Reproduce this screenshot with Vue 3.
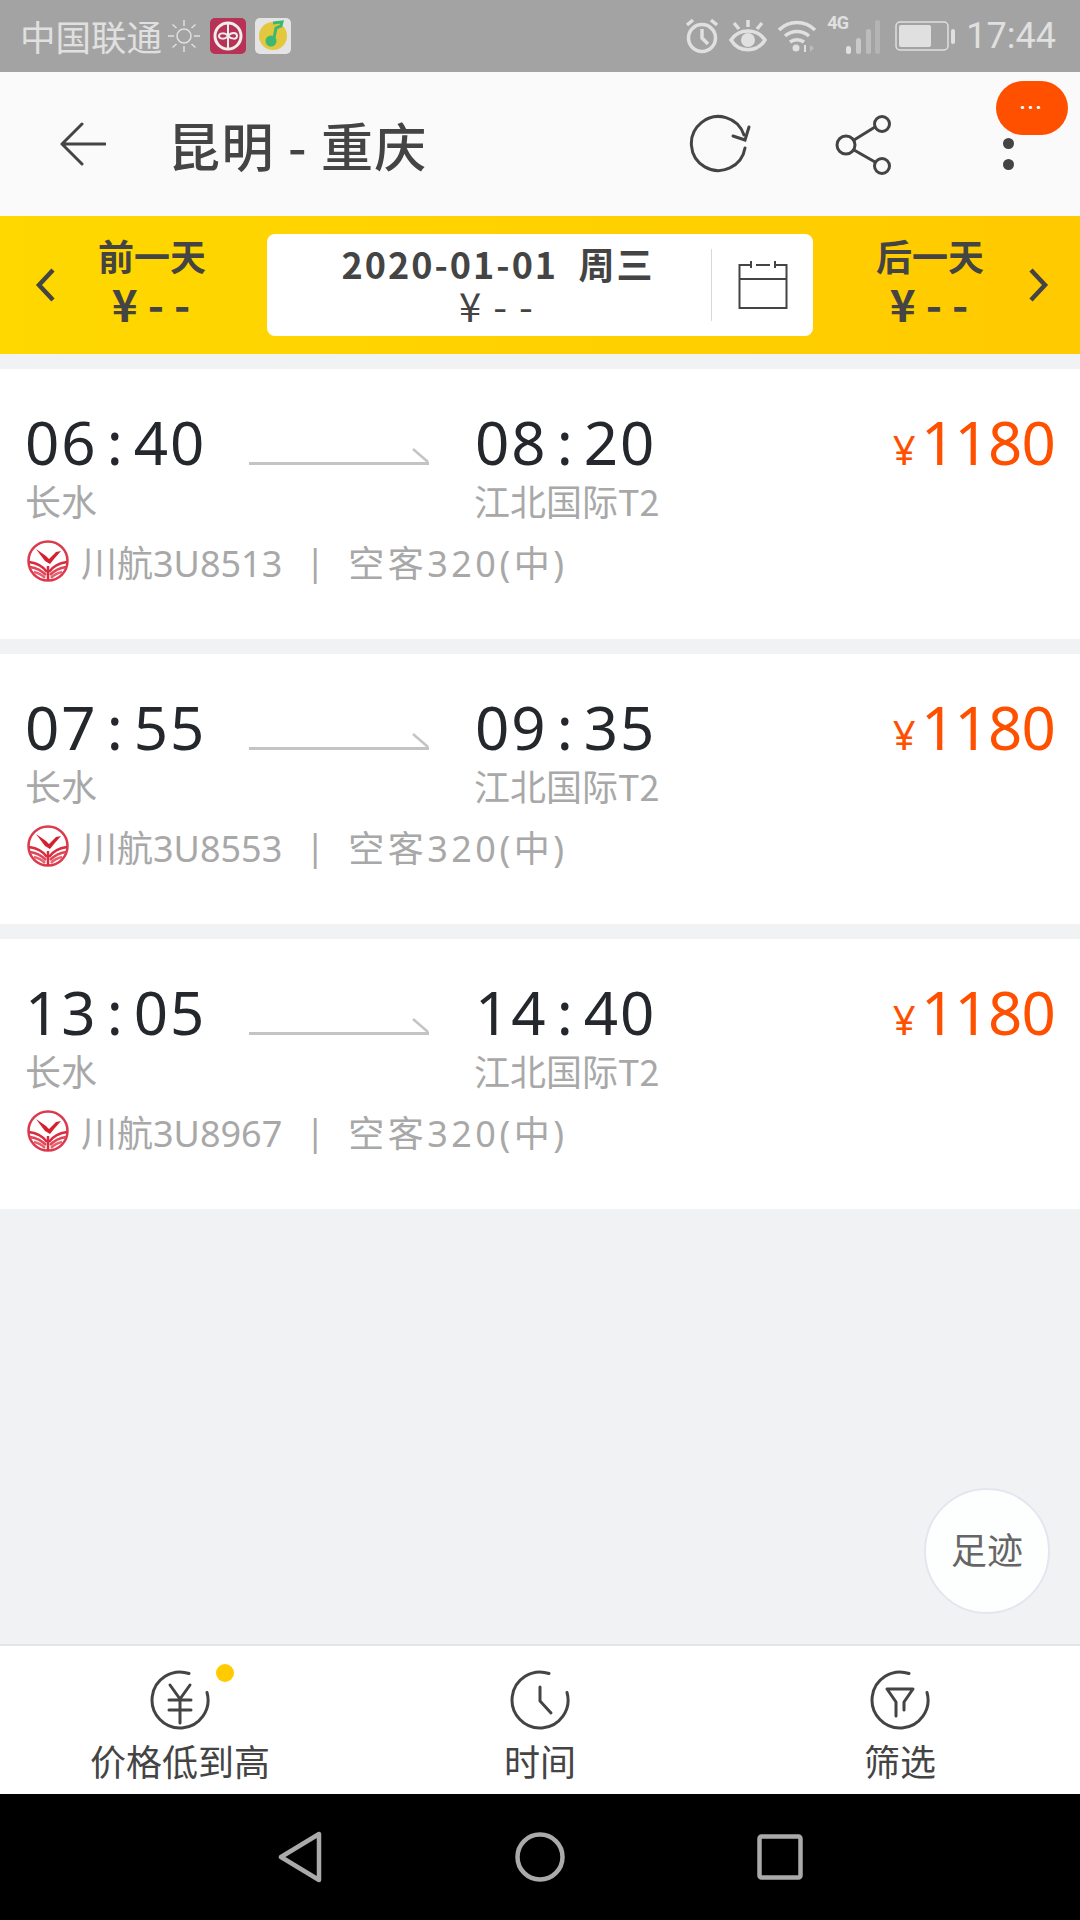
<script setup>
const flights = [
  { dep: ['06', '40'], arr: ['08', '20'], no: '3U8513' },
  { dep: ['07', '55'], arr: ['09', '35'], no: '3U8553' },
  { dep: ['13', '05'], arr: ['14', '40'], no: '3U8967' },
]
</script>

<template>
  <div class="page">
    <!-- status bar -->
    <div class="status">
      <span class="carrier">中国联通</span>
      <svg class="sun" width="32" height="34" viewBox="0 0 32 34" fill="none" stroke="#e0e0e0" stroke-width="1.5">
        <circle cx="16" cy="17" r="7" />
        <path d="M16 1v6M16 27v6M0 17h6M26 17h6M4.5 5.5l4 3.5M27.5 5.5l-4 3.5M4.5 28.5l4-3.5M27.5 28.5l-4-3.5" />
      </svg>
      <svg class="app" width="36" height="36" viewBox="0 0 36 36">
        <rect width="36" height="36" rx="5" fill="#b73254" />
        <circle cx="18" cy="18" r="13" fill="none" stroke="#eee" stroke-width="3" />
        <path d="M18 5v26M18 18c-3-4-9-3-9 0s6 4 9 0 9-4 9 0-6 3-9 0" fill="none" stroke="#eee" stroke-width="2" />
      </svg>
      <svg class="app" width="36" height="36" viewBox="0 0 36 36">
        <rect width="36" height="36" rx="5" fill="#e4e4e4" />
        <circle cx="18" cy="18" r="14" fill="#e3c73f" />
        <path d="M18 5l9-1-1 4-5 2-2 10" fill="none" stroke="#3eb871" stroke-width="3" />
        <circle cx="16" cy="23" r="5.5" fill="#3eb871" />
      </svg>
      <div class="status-right">
        <svg width="34" height="36" viewBox="0 0 34 36" fill="none" stroke="#e0e0e0" stroke-width="3.5">
          <circle cx="17" cy="20" r="13.5" />
          <path d="M17 11v9l6 6M2 7l6-5M32 7l-6-5" />
        </svg>
        <svg width="38" height="34" viewBox="0 0 38 34" fill="none" stroke="#e0e0e0" stroke-width="3.5">
          <path d="M2 21c8-12 26-12 34 0-8 13-26 13-34 0z" />
          <circle cx="19" cy="21" r="7" fill="#e0e0e0" stroke="none" />
          <path d="M19 1v7M5 4l5 6M33 4l-5 6" />
        </svg>
        <svg width="40" height="34" viewBox="0 0 40 34" fill="none" stroke="#e0e0e0" stroke-width="3.5">
          <path d="M2 11c10-10 26-10 36 0M8 17c7-6 17-6 24 0M13 23c4-3 10-3 14 0" />
          <circle cx="19" cy="29" r="3.5" fill="#e0e0e0" stroke="none" />
          <path d="M28 26v7" stroke-width="2" />
          <path d="M33 26l4 3-4 4z" fill="#bdbdbd" stroke="none" />
        </svg>
        <div class="signal">
          <span class="net">4G</span>
          <svg width="36" height="36" viewBox="0 0 36 36">
            <rect x="1" y="28" width="5" height="8" rx="2.5" fill="#e0e0e0" />
            <rect x="11" y="20" width="5" height="16" rx="2.5" fill="#c9c9c9" />
            <rect x="21" y="11" width="5" height="25" rx="2.5" fill="#bcbcbc" />
            <rect x="30" y="2" width="5" height="34" rx="2.5" fill="#b4b4b4" />
          </svg>
        </div>
        <svg class="battery" width="60" height="30" viewBox="0 0 60 30">
          <rect x="1" y="1" width="52" height="28" rx="4" fill="none" stroke="#e0e0e0" stroke-width="1.5" />
          <rect x="4" y="4" width="32" height="22" rx="2" fill="#e0e0e0" />
          <rect x="56" y="8" width="4" height="15" rx="2" fill="#e0e0e0" />
        </svg>
        <span class="clock">17:44</span>
      </div>
    </div>

    <!-- title bar -->
    <div class="topbar">
      <svg class="back" width="46" height="44" viewBox="0 0 46 44" fill="none" stroke="#444" stroke-width="3" stroke-linecap="round" stroke-linejoin="round">
        <path d="M22 2L2 22l20 20M2 22h43" />
      </svg>
      <h1 class="title">昆明 - 重庆</h1>
      <svg class="refresh" width="62" height="62" viewBox="0 0 62 62" fill="none" stroke="#444" stroke-width="3" stroke-linecap="round">
        <path d="M56 35a27 27 0 1 1-1-13" />
        <path d="M44 23l12 4 4-13" />
      </svg>
      <svg class="share" width="58" height="60" viewBox="0 0 58 60" fill="none" stroke="#444" stroke-width="3">
        <circle cx="11" cy="30" r="9" />
        <circle cx="47" cy="9" r="7.5" />
        <circle cx="47" cy="51" r="7.5" />
        <path d="M19 25l21-13M19 35l21 12" />
      </svg>
      <div class="more"><i></i><i></i></div>
      <div class="msg-badge">···</div>
    </div>

    <!-- date strip -->
    <div class="datebar">
      <svg class="chev" width="20" height="34" viewBox="0 0 20 34" fill="none" stroke="#444" stroke-width="4.5">
        <path d="M18 2L4 17l14 15" />
      </svg>
      <div class="day day-prev">
        <div class="day-name">前一天</div>
        <div class="day-price">¥--</div>
      </div>
      <div class="datebox">
        <div class="datebox-text">
          <div class="date-main">2020-01-01&nbsp;&nbsp;周三</div>
          <div class="date-price">¥--</div>
        </div>
        <div class="datebox-cal">
          <svg width="50" height="48" viewBox="0 0 50 48" fill="none" stroke="#444" stroke-width="2">
            <path d="M12 4H1.5v43h47V4H38M18 4h14M1.5 18h47" />
            <path d="M13 0v7M37 0v7" />
          </svg>
        </div>
      </div>
      <div class="day day-next">
        <div class="day-name">后一天</div>
        <div class="day-price">¥--</div>
      </div>
      <svg class="chev" width="20" height="34" viewBox="0 0 20 34" fill="none" stroke="#444" stroke-width="4.5">
        <path d="M2 2l14 15L2 32" />
      </svg>
    </div>

    <!-- flight list -->
    <div class="list">
      <div v-for="f in flights" :key="f.no" class="card">
        <div class="card-top">
          <div class="time dep">{{ f.dep[0] }}<span class="colon">:</span>{{ f.dep[1] }}</div>
          <svg class="arrow" width="181" height="20" viewBox="0 0 181 20" fill="none" stroke="#c4c4c4">
            <path d="M0 17.5h180" stroke-width="3" />
            <path d="M164 3l15 13" stroke-width="2.5" />
          </svg>
          <div class="time arr">{{ f.arr[0] }}<span class="colon">:</span>{{ f.arr[1] }}</div>
          <div class="price"><span class="yen">¥</span>1180</div>
        </div>
        <div class="stations">
          <span class="dep">长水</span>
          <span class="arr">江北国际T2</span>
        </div>
        <div class="flight">
          <svg class="logo" width="42" height="42" viewBox="0 0 42 42" fill="none">
            <circle cx="21" cy="21" r="19.5" fill="#fff" stroke="#dc3a4c" stroke-width="2.5" />
            <path d="M9 9l10 7 3 3 7-7 5-1-7 8-4 5-5-3z" fill="#d4202f" />
            <path d="M2 22c7 1 14 4 18 10M40 22c-7 1-14 4-18 10" stroke="#d92c3e" stroke-width="2.5" />
            <path d="M3 27c7 1 12 4 16 8M39 27c-7 1-12 4-16 8" stroke="#e04557" stroke-width="2.5" />
            <path d="M7 32c5 1 8 3 11 6M35 32c-5 1-8 3-11 6" stroke="#e8606f" stroke-width="2.5" />
            <path d="M21 26v14" stroke="#d92c3e" stroke-width="2.5" />
          </svg>
          <span class="flight-no">川航{{ f.no }}</span>
          <span class="sep">|</span>
          <span class="plane">空客320(中)</span>
        </div>
      </div>
    </div>

    <div class="history">足迹</div>

    <!-- bottom tabs -->
    <div class="tabs">
      <div class="tab">
        <div class="tab-icon">
          <svg width="62" height="62" viewBox="0 0 62 62" fill="none" stroke="#444" stroke-width="3" stroke-linecap="round">
            <path d="M40 4.5a28 28 0 1 0 18 19" />
            <path d="M21 16l10 14 10-14M20 31h22M20 41h22M31 30v24" />
          </svg>
          <span class="dot"></span>
        </div>
        <span class="tab-label">价格低到高</span>
      </div>
      <div class="tab">
        <div class="tab-icon">
          <svg width="62" height="62" viewBox="0 0 62 62" fill="none" stroke="#444" stroke-width="3" stroke-linecap="round">
            <path d="M40 4.5a28 28 0 1 0 18 19" />
            <path d="M31 18v14l11 12" />
          </svg>
        </div>
        <span class="tab-label">时间</span>
      </div>
      <div class="tab">
        <div class="tab-icon">
          <svg width="62" height="62" viewBox="0 0 62 62" fill="none" stroke="#444" stroke-width="3" stroke-linecap="round" stroke-linejoin="round">
            <path d="M40 4.5a28 28 0 1 0 18 19" />
            <path d="M18 20h26l-9 13v8M27 47V33l-9-13" />
          </svg>
        </div>
        <span class="tab-label">筛选</span>
      </div>
    </div>

    <!-- android nav -->
    <div class="sysnav">
      <svg width="44" height="52" viewBox="0 0 44 52" fill="none" stroke="#aaa" stroke-width="4.5" stroke-linejoin="round">
        <path d="M41 3v46L3 26z" />
      </svg>
      <svg width="50" height="50" viewBox="0 0 50 50" fill="none" stroke="#aaa" stroke-width="4.5">
        <circle cx="25" cy="25" r="22.5" />
      </svg>
      <svg width="46" height="46" viewBox="0 0 46 46" fill="none" stroke="#aaa" stroke-width="4.5" stroke-linejoin="round">
        <rect x="2.5" y="2.5" width="41" height="41" rx="2" />
      </svg>
    </div>
  </div>
</template>

<style>
html,
body {
  margin: 0;
  background: #f1f2f4;
}
</style>

<style scoped>
.page {
  position: relative;
  width: 1080px;
  height: 1920px;
  display: flex;
  flex-direction: column;
  background: #f1f2f4;
  font-family: "Noto Sans", "Noto Sans CJK SC", sans-serif;
  overflow: hidden;
}

.status {
  height: 72px;
  flex: none;
  display: flex;
  align-items: center;
  padding: 0 24px 0 20px;
  background: #a3a3a3;
  color: #e0e0e0;
}

.carrier {
  font-size: 35.5px;
  font-family: "Noto Sans CJK SC", sans-serif;
  margin-top: -2px;
}

.sun {
  margin-left: 6px;
}

.app {
  margin-left: 9px;
}

.sun + .app {
  margin-left: 10px;
}

.status-right {
  margin-left: auto;
  display: flex;
  align-items: center;
  gap: 10px;
}

.signal {
  position: relative;
  display: flex;
  padding-left: 18px;
  width: 40px;
}

.net {
  position: absolute;
  left: 0;
  top: -6px;
  font-size: 18px;
  font-weight: 700;
  letter-spacing: -1px;
  font-family: "Roboto", sans-serif;
  color: #e0e0e0;
}

.clock {
  font-size: 36px;
  font-family: "Roboto", sans-serif;
  margin-left: 1px;
}

.topbar {
  position: relative;
  height: 144px;
  flex: none;
  display: flex;
  align-items: center;
  padding-left: 60px;
  background: #fafafa;
}

.title {
  margin: 2px 0 0 62px;
  font-size: 52px;
  font-weight: 500;
  line-height: 1;
  letter-spacing: 1.4px;
  color: #444;
  font-family: "Noto Sans CJK SC", sans-serif;
}

.refresh {
  position: absolute;
  left: 689px;
  top: 41px;
}

.share {
  position: absolute;
  left: 835px;
  top: 43px;
}

.more {
  position: absolute;
  left: 1003px;
  top: 66px;
  display: flex;
  flex-direction: column;
  gap: 10px;
}

.more i {
  width: 11px;
  height: 11px;
  border-radius: 50%;
  background: #444;
}

.msg-badge {
  position: absolute;
  left: 996px;
  top: 9px;
  width: 72px;
  height: 54px;
  border-radius: 27px;
  background: #ff5000;
  color: #fff;
  font-size: 18px;
  font-weight: 700;
  line-height: 52px;
  letter-spacing: 3px;
  text-align: center;
}

.datebar {
  height: 138px;
  flex: none;
  display: flex;
  align-items: center;
  padding: 0 30px 0 35px;
  background: linear-gradient(to right, #ffd800, #ffca00);
  color: #444;
}

.day {
  width: 212px;
  box-sizing: border-box;
  padding-bottom: 8px;
  text-align: center;
  font-family: "Noto Sans CJK SC", sans-serif;
}

.day-prev {
  padding-right: 18px;
}

.day-next {
  padding-left: 22px;
  margin-right: 4px;
}

.day-name {
  font-size: 36px;
  font-weight: 700;
  line-height: 44px;
}

.day-price {
  padding-left: 8px;
  font-size: 44px;
  font-weight: 700;
  line-height: 52px;
  letter-spacing: 10px;
}

.datebox {
  width: 546px;
  height: 102px;
  display: flex;
  align-items: center;
  border-radius: 8px;
  background: #fff;
}

.datebox-text {
  flex: 1;
  padding: 0 0 8px 18px;
  text-align: center;
}

.date-main {
  font-size: 36px;
  font-weight: 700;
  line-height: 48px;
  letter-spacing: 2px;
  font-family: "Noto Sans CJK SC", sans-serif;
}

.date-price {
  padding-left: 8px;
  font-size: 40px;
  line-height: 36px;
  letter-spacing: 12px;
  font-family: "Noto Sans CJK SC", sans-serif;
}

.datebox-cal {
  width: 102px;
  height: 72px;
  flex: none;
  display: flex;
  align-items: center;
  justify-content: center;
  padding-left: 1px;
  box-sizing: border-box;
  border-left: 1px solid #d8d8d8;
}

.list {
  margin-top: 15px;
  display: flex;
  flex-direction: column;
  gap: 15px;
}

.card {
  height: 270px;
  padding: 36px 25px 0;
  box-sizing: border-box;
  background: #fff;
}

.card-top {
  display: flex;
  align-items: center;
  height: 72px;
}

.time {
  padding-top: 2px;
  font-size: 60px;
  line-height: 72px;
  letter-spacing: 2px;
  color: #24272b;
}

.colon {
  margin: 0 9px;
}

.dep {
  width: 224px;
}

.arrow {
  margin: 30px 45px 0 0;
  flex: none;
}

.arr {
  width: 300px;
}

.price {
  margin-left: auto;
  padding-top: 10px;
  font-size: 60px;
  line-height: 72px;
  letter-spacing: -0.8px;
  color: #ff5000;
}

.yen {
  margin-right: 6px;
  font-size: 40px;
}

.stations {
  display: flex;
  height: 48px;
  line-height: 47px;
  font-size: 36px;
  color: #a8a8a8;
  font-family: "Noto Sans CJK SC", sans-serif;
}

.stations .dep {
  width: 449px;
}

.flight {
  display: flex;
  align-items: center;
  height: 72px;
  font-size: 36px;
  color: #a8a8a8;
}

.logo {
  margin: 0 12px 0 2px;
}

.sep {
  margin: 0 23px;
}

.plane {
  letter-spacing: 3.5px;
}

.history {
  position: absolute;
  left: 924px;
  top: 1488px;
  width: 126px;
  height: 126px;
  box-sizing: border-box;
  border: 2px solid #e2e7ef;
  border-radius: 50%;
  background: #fdfefe;
  color: #666;
  font-size: 36px;
  line-height: 117px;
  text-align: center;
  font-family: "Noto Sans CJK SC", sans-serif;
}

.tabs {
  margin-top: auto;
  height: 150px;
  flex: none;
  display: flex;
  background: #fff;
  border-top: 2px solid #e3e4e6;
  box-sizing: border-box;
}

.tab {
  flex: 1;
  display: flex;
  flex-direction: column;
  align-items: center;
  padding-top: 23px;
}

.tab-icon {
  position: relative;
  width: 62px;
  height: 62px;
}

.dot {
  position: absolute;
  left: 67px;
  top: -5px;
  width: 18px;
  height: 18px;
  border-radius: 50%;
  background: #ffcb00;
}

.tab-label {
  margin-top: 4px;
  font-size: 36px;
  line-height: 50px;
  color: #444;
  font-family: "Noto Sans CJK SC", sans-serif;
}

.sysnav {
  height: 126px;
  flex: none;
  display: flex;
  align-items: center;
  padding-left: 278px;
  gap: 192.5px;
  background: #000;
}
</style>
